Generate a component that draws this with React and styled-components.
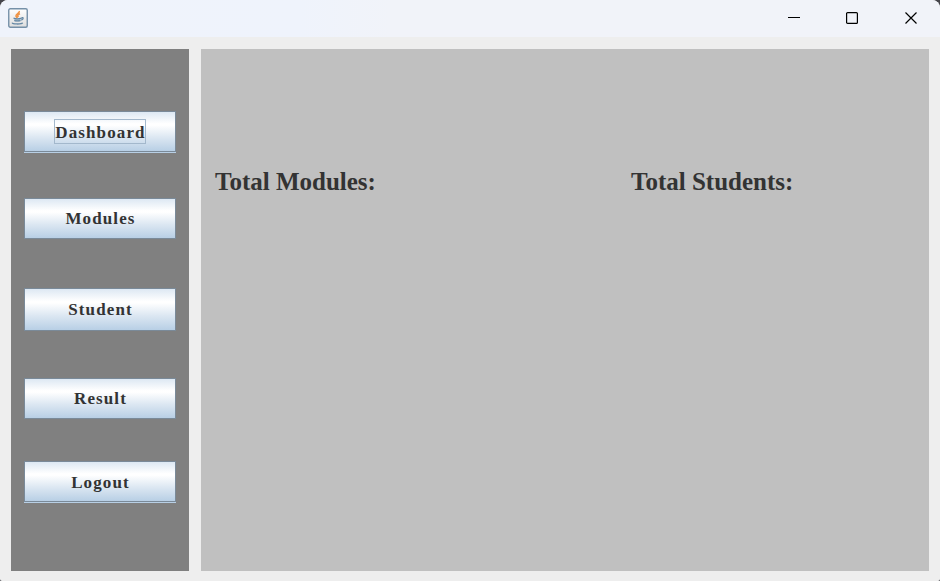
import React from "react";
import styled, { createGlobalStyle } from "styled-components";

const GlobalStyle = createGlobalStyle`
  * { box-sizing: border-box; }
  body { margin: 0; background: #45454b; overflow: hidden; }
`;

const Window = styled.div`
  width: 940px;
  height: 581px;
  display: flex;
  flex-direction: column;
  overflow: hidden;
  background: #eeeeee;
  border-radius: 8px 8px 2px 2px;
  font-family: "Liberation Serif", "Times New Roman", serif;
  font-weight: bold;
  color: #333333;
`;

const TitleBar = styled.header`
  height: 37px;
  flex: none;
  display: flex;
  align-items: flex-start;
  justify-content: space-between;
  padding-left: 8px;
  background: linear-gradient(90deg, #eff3fb 0, #eff3fc 300px, #f1f3f9 390px, #f1f3f9 100%);
`;

const AppIcon = styled.svg`
  margin-top: 8px;
  width: 20px;
  height: 20px;
`;

const Controls = styled.div`
  display: flex;
  height: 36px;
`;

const ControlButton = styled.button`
  width: ${(p) => p.$width || 58}px;
  height: 36px;
  padding: 0;
  border: 0;
  background: transparent;
  display: grid;
  place-items: center;
`;

const Body = styled.div`
  flex: 1;
  display: flex;
  gap: 12px;
  padding: 12px 11px 10px;
`;

const Sidebar = styled.nav`
  width: 178px;
  padding: 62px 13px 0;
  background: #808080;
  display: flex;
  flex-direction: column;
`;

const NavButton = styled.button`
  flex: none;
  width: 152px;
  height: ${(p) => p.$height}px;
  margin: 0 0 ${(p) => p.$gap}px;
  padding: 0;
  display: flex;
  align-items: center;
  justify-content: center;
  border: 1px solid #7a8a99;
  background: linear-gradient(#dde8f3 0%, #ffffff 30%, #ffffff 34%, #dce7f2 65%, #b8cfe5 100%);
  box-shadow: ${(p) => (p.$ledge ? "0 1px 0 #b8cfe5" : "none")};
  font: bold 17px "Liberation Serif", "Times New Roman", serif;
  letter-spacing: 1.12px;
  color: #333333;
`;

const NavLabel = styled.span`
  height: 25px;
  line-height: ${(p) => (p.$low ? 27 : 25)}px;
  padding: 0 0 0 1px;
  outline: ${(p) => (p.$focused ? "1px solid #a3b8cc" : "none")};
  outline-offset: -1px;
`;

const Content = styled.main`
  width: 728px;
  display: flex;
  align-items: flex-start;
  padding: 118px 0 0 14px;
  background: #c0c0c0;
`;

const Stat = styled.div`
  flex: none;
  width: ${(p) => p.$width}px;
  font-size: 25px;
  line-height: 29px;
  white-space: nowrap;
`;

const items = [
  { label: "Dashboard", height: 41, gap: 46, ledge: true, focused: true },
  { label: "Modules", height: 41, gap: 49 },
  { label: "Student", height: 43, gap: 47 },
  { label: "Result", height: 41, gap: 42 },
  { label: "Logout", height: 41, gap: 0, ledge: true },
];

function JavaIcon() {
  return (
    <AppIcon viewBox="0 0 20 20" aria-hidden="true">
      <defs>
        <linearGradient id="tile" x2="0" y2="1">
          <stop stopColor="#ffffff" />
          <stop offset="1" stopColor="#dddddd" />
        </linearGradient>
      </defs>
      <rect x=".75" y=".75" width="18.5" height="18.5" rx="1.5" fill="url(#tile)" stroke="#7590a8" strokeWidth="1.4" />
      <path d="M11.3 3C12 5 7.5 6 8 8c.2 1 1 1.3 1.5 2M12 5.7c-3 1-2.5 2-1.6 3.2" fill="none" stroke="#ef9447" strokeWidth="1.6" />
      <path d="M5.5 10.2c2 .8 6 .7 8.2 0M6.3 12.3c2 .7 4.4.6 6.2 0M13.5 9.8c2.2-.8 2.3 1.4-.3 2.4M4.5 14.6c-1.5 1.8 9.5 1.8 10.2.2" fill="none" stroke="#6588a5" strokeWidth="1.3" />
      <path d="M6.5 11h6v2.6h-6z" fill="#7896ae" opacity=".6" />
    </AppIcon>
  );
}

export default function App() {
  return (
    <>
      <GlobalStyle />
      <Window>
        <TitleBar>
          <JavaIcon />
          <Controls>
            <ControlButton aria-label="Minimize">
              <svg width="12" height="12"><path d="M0 5.5h12" stroke="#000" /></svg>
            </ControlButton>
            <ControlButton aria-label="Maximize">
              <svg width="12" height="12"><rect x=".6" y=".6" width="10.8" height="10.8" rx="1" fill="none" stroke="#000" strokeWidth="1.2" /></svg>
            </ControlButton>
            <ControlButton $width={59} aria-label="Close">
              <svg width="12" height="12"><path d="M.5.5l11 11M11.5.5l-11 11" stroke="#000" strokeWidth="1.2" /></svg>
            </ControlButton>
          </Controls>
        </TitleBar>
        <Body>
          <Sidebar>
            {items.map((i) => (
              <NavButton key={i.label} $height={i.height} $gap={i.gap} $ledge={i.ledge}>
                <NavLabel $focused={i.focused} $low={i.ledge}>{i.label}</NavLabel>
              </NavButton>
            ))}
          </Sidebar>
          <Content>
            <Stat $width={416}>Total Modules:</Stat>
            <Stat $width={298}>Total Students:</Stat>
          </Content>
        </Body>
      </Window>
    </>
  );
}
